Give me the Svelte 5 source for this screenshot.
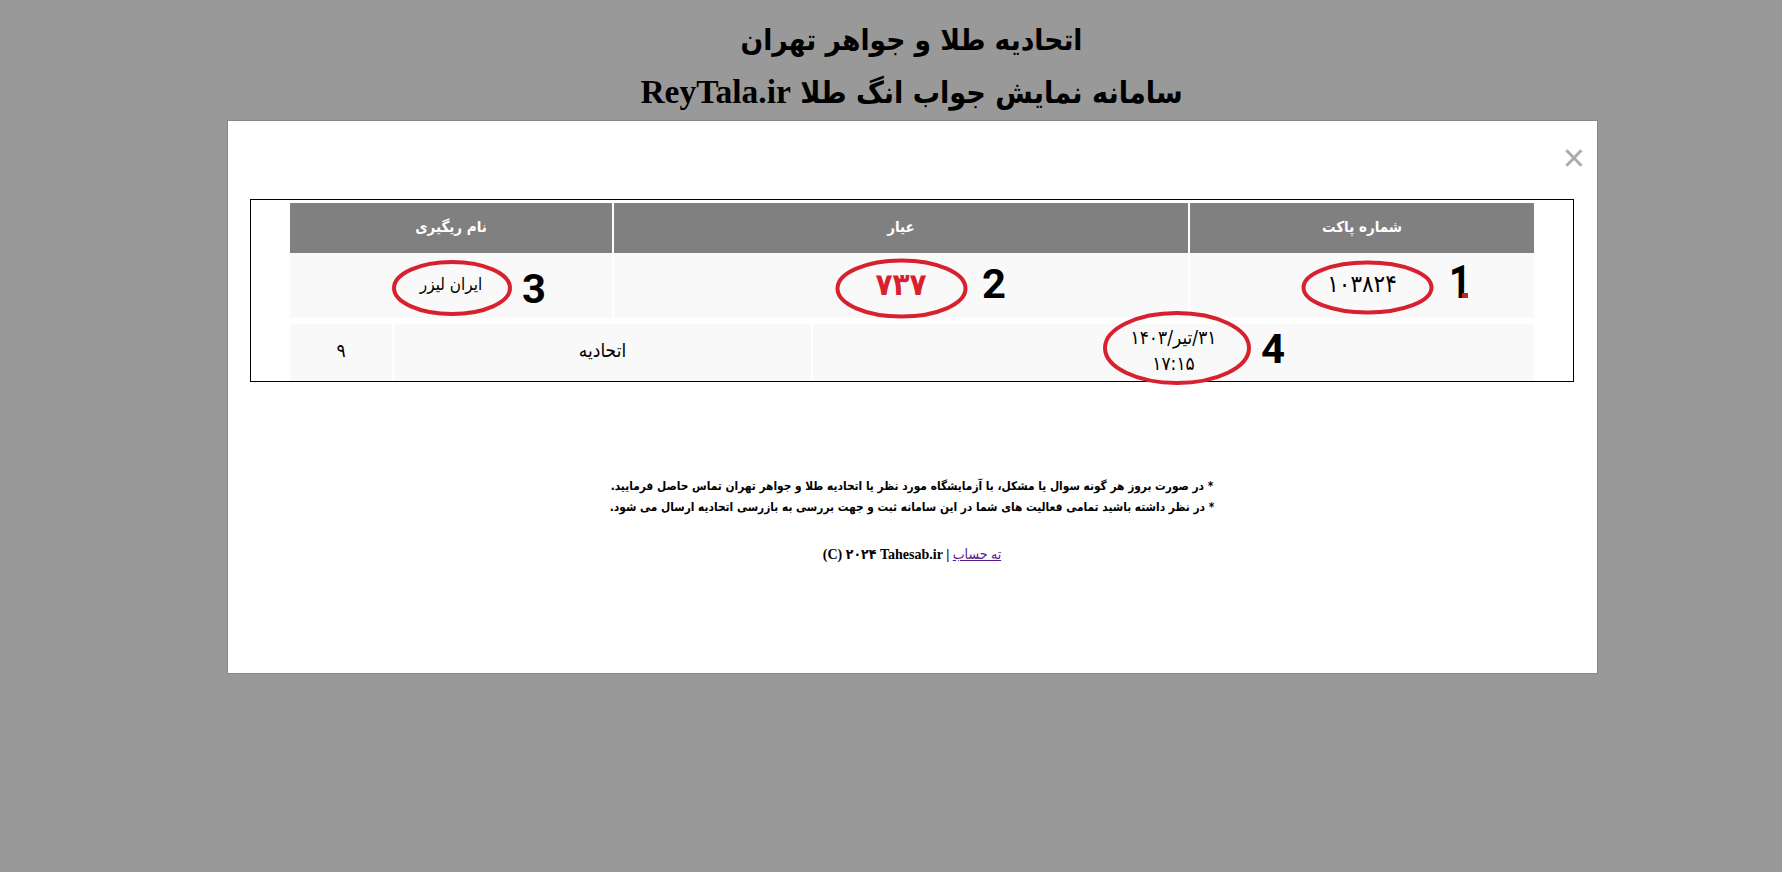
<script>
	let packet = { id: '۱۰۳۸۲۴', karat: '۷۳۷', lab: 'ایران لیزر' };
	let detail = { date: '۳۱/تیر/۱۴۰۳', time: '۱۷:۱۵', source: 'اتحادیه', count: '۹' };
	let marks = [
		{ cx: 1367.5, cy: 287.5, rx: 64, ry: 25, label: '1', x: 1460, y: 298, size: 46, width: 22 },
		{ cx: 901.5, cy: 288.5, rx: 64, ry: 28, label: '2', x: 994, y: 298, size: 41, width: 24 },
		{ cx: 452, cy: 288, rx: 58, ry: 26, label: '3', x: 534, y: 303, size: 41, width: 24 },
		{ cx: 1177, cy: 348, rx: 72, ry: 35, label: '4', x: 1273, y: 363, size: 41, width: 24 }
	];
</script>

<main class="page">
	<header class="titles" dir="rtl">
		<h2>اتحادیه طلا و جواهر تهران</h2>
		<h2 class="sub">سامانه نمایش جواب انگ طلا <span class="latin">ReyTala.ir</span></h2>
	</header>

	<section class="modal">
		<div class="closeRow"><span class="close">×</span></div>

		<div class="frame" dir="rtl">
			<table class="results first">
				<thead>
					<tr>
						<th class="colId">شماره پاکت</th>
						<th class="colKarat">عیار</th>
						<th>نام ریگیری</th>
					</tr>
				</thead>
				<tbody>
					<tr>
						<td class="colId number">{packet.id}</td>
						<td class="colKarat karat">{packet.karat}</td>
						<td class="lab">{packet.lab}</td>
					</tr>
				</tbody>
			</table>
			<table class="results second">
				<tbody>
					<tr>
						<td class="colDate">{detail.date}<br />{detail.time}</td>
						<td class="colSource">{detail.source}</td>
						<td>{detail.count}</td>
					</tr>
				</tbody>
			</table>
		</div>

		<div class="notes" dir="rtl">
			<p>* در صورت بروز هر گونه سوال یا مشکل، با آزمایشگاه مورد نظر یا اتحادیه طلا و جواهر تهران تماس حاصل فرمایید.</p>
			<p>* در نظر داشته باشید تمامی فعالیت های شما در این سامانه ثبت و جهت بررسی به بازرسی اتحادیه ارسال می شود.</p>
		</div>

		<p class="footer">(C) ۲۰۲۴ Tahesab.ir | <a href="#top">ته حساب</a></p>
	</section>

	<!-- hand drawn annotations on top of the page -->
	<svg class="marks" viewBox="0 0 1782 872" aria-hidden="true">
		{#each marks as m}
			<ellipse cx={m.cx} cy={m.cy} rx={m.rx} ry={m.ry} />
			<text x={m.x} y={m.y} font-size={m.size} textLength={m.width} lengthAdjust="spacingAndGlyphs">{m.label}</text>
		{/each}
		<rect class="tip" x="1462" y="293" width="6" height="5" />
	</svg>
</main>

<style>
	:global(body) {
		background: #999;
	}
	.page {
		position: relative;
		height: 872px;
		overflow: hidden;
		padding-top: 15px;
		box-sizing: border-box;
		font-family: 'DejaVu Sans Condensed', 'DejaVu Sans', sans-serif;
		color: #000;
	}
	.titles {
		text-align: center;
		margin-left: 41px;
		height: 105px;
	}
	h2 {
		margin: 0;
		font-family: 'DejaVu Sans Condensed', 'DejaVu Sans', sans-serif;
		font-size: 29.5px;
		font-weight: bold;
		line-height: 51px;
	}
	.sub {
		font-size: 30.2px;
	}
	.latin {
		font-family: 'Liberation Serif', serif;
		font-size: 33.5px;
	}
	.modal {
		width: 1371px;
		height: 554px;
		margin-left: 227px;
		background: #fff;
		border: 1px solid #888;
		padding: 0 23px 0 22px;
		box-sizing: border-box;
	}
	.closeRow {
		display: flex;
		justify-content: flex-end;
		height: 78px;
		padding-top: 18px;
		box-sizing: border-box;
	}
	.close {
		margin-right: -11px;
		color: #aaa;
		font-size: 38px;
		line-height: 38px;
		font-family: 'Liberation Sans', sans-serif;
	}
	.frame {
		border: 1px solid #000;
		padding: 3px 39px;
		height: 175px;
		display: flex;
		flex-direction: column;
		gap: 6px;
	}
	.results {
		width: 100%;
		border-collapse: collapse;
		table-layout: fixed;
	}
	th,
	td {
		box-sizing: border-box;
		padding: 0 0 3px;
		text-align: center;
		vertical-align: middle;
		font-weight: normal;
		border-left: 2px solid #fff;
		background: #f9f9f9;
		font-size: 19px;
	}
	th:last-child,
	td:last-child {
		border-left: 0;
	}
	th {
		height: 50px;
		background: #808080;
		color: #fff;
		font-weight: bold;
		font-size: 15px;
	}
	.first td {
		height: 65px;
	}
	.second td {
		height: 54px;
		line-height: 26px;
		padding-bottom: 5px;
	}
	.colId {
		width: 345px;
	}
	.colKarat {
		width: 576px;
	}
	.colDate {
		width: 722px;
	}
	.colSource {
		width: 419px;
	}
	.number {
		font-size: 24px;
	}
	.karat {
		color: #d9202f;
		font-size: 31px;
		font-weight: bold;
	}
	.lab {
		font-size: 17px;
	}
	.notes {
		margin-top: 94px;
		text-align: center;
		font-size: 11.8px;
		font-weight: bold;
		line-height: 21px;
	}
	.notes p {
		margin: 0;
	}
	.footer {
		margin: 26px 0 0;
		text-align: center;
		font-family: 'Liberation Serif', 'DejaVu Sans Condensed', 'DejaVu Sans', serif;
		font-size: 14px;
		font-weight: bold;
		line-height: 21px;
	}
	.footer a {
		color: #551a8b;
		font-weight: normal;
	}
	.marks {
		position: absolute;
		top: 0;
		left: 0;
		width: 1782px;
		height: 872px;
		pointer-events: none;
	}
	ellipse {
		fill: none;
		stroke: #d8212f;
		stroke-width: 4;
	}
	text {
		font-family: Roboto, 'Liberation Sans', sans-serif;
		font-weight: 700;
		text-anchor: middle;
		fill: #000;
	}
	.tip {
		fill: #c0222c;
	}
</style>
